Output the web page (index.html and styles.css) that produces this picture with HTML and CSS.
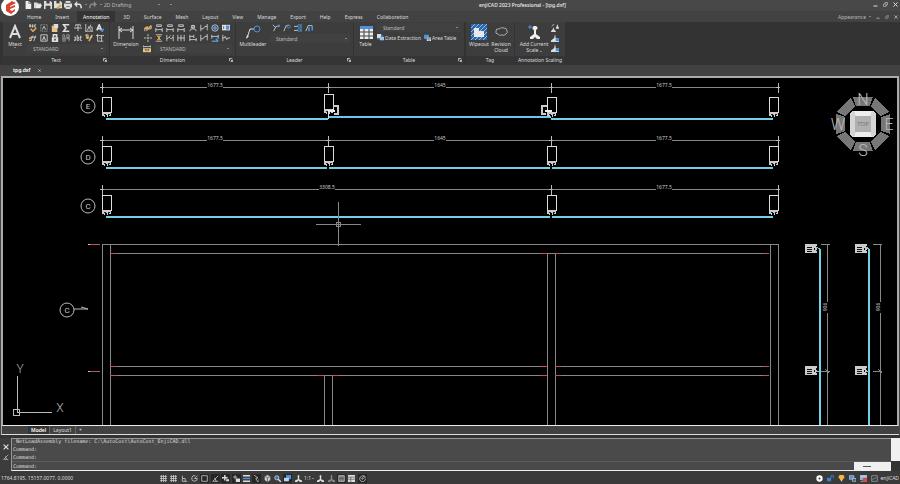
FILE: index.html
```html
<!DOCTYPE html>
<html lang="en">
  <head>
    <meta charset="utf-8" />
    <title>enjiCAD 2023 Professional - [tpg.dxf]</title>
    <meta name="viewport" content="width=device-width, initial-scale=1.0" />
    <link rel="stylesheet" href="styles.css">
  </head>
  <body>
    <!-- icon set -->
    <svg class="sprite" aria-hidden="true">
      <symbol id="new" viewBox="0 0 10 10"><path d="M2 0h4l3 3v7H2z" fill="#eee" stroke="none" /><path d="M6 0v3h3" stroke="#666" /></symbol>
      <symbol id="open" viewBox="0 0 10 10"><path d="M0 2h4l1 1h4v2H3L1 9H0z" fill="#ddd" stroke="none" /><path d="M3 5h7L8 9H1z" fill="#eee" stroke="none" /></symbol>
      <symbol id="save" viewBox="0 0 10 10"><path d="M0 0h8l2 2v8H0z" fill="#ddd" stroke="none" /><path d="M3 0h4v3H3zM2 6h6v4H2z" fill="#444" stroke="none" /></symbol>
      <symbol id="saveas" viewBox="0 0 10 10"><path d="M0 0h8l2 2v7H0z" fill="#ddd" stroke="none" /><path d="M3 0h4v3H3z" fill="#444" stroke="none" /><path d="M3 8l5-4 2 2-5 4z" fill="#e3a950" stroke="none" /></symbol>
      <symbol id="print" viewBox="0 0 10 10"><path d="M2 0h6v3h2v5H8v2H2V8H0V3h2z" fill="#ddd" stroke="none" /><path d="M2 3h6M3 7h4" stroke="#444" /></symbol>
      <symbol id="undo" viewBox="0 0 10 10"><path d="M3 4h3q3 0 3 5" stroke-width="2" /><path d="M0 4l4-4v8z" fill="currentColor" stroke="none" /></symbol>
      <symbol id="redo" viewBox="0 0 10 10"><path d="M7 4H4Q1 4 1 9" stroke-width="2" /><path d="M10 4L6 0v8z" fill="currentColor" stroke="none" /></symbol>
      <symbol id="spell" viewBox="0 0 10 10"><path d="M0 4V1h2v3M0 3h2M4 1h1v3H4zM9 1H7v3h2" /><path d="M2 6l3 3 4-4" stroke="#e3a950" stroke-width="2" /></symbol>
      <symbol id="textfind" viewBox="0 0 10 10"><path d="M1 1h8v8H1z" stroke-dasharray="2 1" stroke="#999" /><path d="M3 7l2-4 2 4" /></symbol>
      <symbol id="paste" viewBox="0 0 10 10"><path d="M1 2h7v8H1z" fill="#e3c58c" stroke="none" /><path d="M3 0h6v5H5z" fill="#ddd" stroke="none" /></symbol>
      <symbol id="sigma" viewBox="0 0 10 10"><path d="M8 2V1H2l3 4-3 4h6V8" stroke-width="2" /></symbol>
      <symbol id="strike" viewBox="0 0 10 10"><path d="M2 1h6M5 1v8M0 5h10" /><path d="M2 1v2M8 1v2" /></symbol>
      <symbol id="align" viewBox="0 0 10 10"><path d="M1 0v10M3 8l2-5 2 5M7 1v3h2v6M1 9h8" /></symbol>
      <symbol id="style" viewBox="0 0 10 10"><path d="M1 8l3-7 3 7M2 6h4" stroke-width="2" /><path d="M6 8l4-2-2 4z" fill="#4b94dc" stroke="#4b94dc" /></symbol>
      <symbol id="edit" viewBox="0 0 10 10"><path d="M5 2L2 9M8 2L6 9M0 8h3M3 4h6" /><path d="M0 6l5-3" stroke="#e3a950" stroke-width="2" /></symbol>
      <symbol id="frame" viewBox="0 0 10 10"><path d="M1 1h8v8H1zM3 8l2-5 2 5M4 6h2" /></symbol>
      <symbol id="lock" viewBox="0 0 10 10"><path d="M3 4V1h4v3" stroke-width="2" /><path d="M1 4h8v6H1z" fill="#ddd" stroke="none" /><path d="M4 6h2v2H4z" fill="#444" stroke="none" /></symbol>
      <symbol id="case" viewBox="0 0 10 10"><path d="M1 1v3M1 1h2v3M6 1v3h3V1zM1 6v3h3V6zM6 6h3v3M0 5h10" stroke="#aaa" /></symbol>
      <symbol id="word" viewBox="0 0 10 10"><path d="M0 4h2v4H0V6M4 1v7h2V4H4M8 2v6h2M8 4h2" /></symbol>
      <symbol id="brush" viewBox="0 0 10 10"><path d="M1 1l3 5M9 1L5 9" stroke="#e3a950" stroke-width="2" /><path d="M1 1h3v4H1M6 4h3" /></symbol>
      <symbol id="crop" viewBox="0 0 10 10"><path d="M0 2h10M2 0v9h7M7 2v7M4 5h2" /></symbol>
      <symbol id="dimquick" viewBox="0 0 10 10"><path d="M1 9V5M9 6V2M1 6h8" /><path d="M1 5l3-1v3l5-5" stroke="#e3a950" stroke-width="2" /></symbol>
      <symbol id="dimlin" viewBox="0 0 10 10"><path d="M1 5v5M9 5v5M1 7h8M2 1h6v2H2z" /></symbol>
      <symbol id="dimrad" viewBox="0 0 10 10"><path d="M1 9q0-3 4-3t4 3M5 6V1M3 2h4v3H3z" /></symbol>
      <symbol id="dimjog" viewBox="0 0 10 10"><path d="M1 1v8M9 0v8M1 6h3l2-3h3" /></symbol>
      <symbol id="dimdia" viewBox="0 0 10 10"><circle cx="5" cy="5" r="4" /><circle cx="5" cy="5" r="2" fill="#4b94dc" stroke="#4b94dc" /></symbol>
      <symbol id="dimtol" viewBox="0 0 10 10"><path d="M0 1h10v7H0z" fill="#ddd" stroke="none" /><path d="M5 2h4v5H5z" fill="#4b94dc" stroke="none" /><path d="M2 3v3" stroke="#444" /></symbol>
      <symbol id="dimcen" viewBox="0 0 10 10"><path d="M5 0v3M5 7v3M0 5h3M7 5h3M4 5h2M5 4v2" /></symbol>
      <symbol id="dimspace" viewBox="0 0 10 10"><path d="M1 1h8M1 9h8" /><path d="M3 3h4L3 7h4z" stroke="#e3a950" fill="#e3a950" /></symbol>
      <symbol id="dimbreak" viewBox="0 0 10 10"><path d="M1 1v8M9 1v8M1 6l3-2 2 2 3-2" /><path d="M6 1l-2 3" stroke="#e3a950" /></symbol>
      <symbol id="dimcont" viewBox="0 0 10 10"><path d="M1 1v8M5 1v8M9 1v8M1 5h8" /></symbol>
      <symbol id="dimbase" viewBox="0 0 10 10"><path d="M1 1v8M9 5v4M1 3h5M6 1v4M1 7h8" /></symbol>
      <symbol id="dimupd" viewBox="0 0 10 10"><path d="M1 1v5M9 1v5M1 3h8" /><path d="M1 9h8M6 6l3 3" stroke="#4b94dc" stroke-width="2" /></symbol>
      <symbol id="dimwave" viewBox="0 0 10 10"><path d="M1 1v8M1 5h2l1-2 2 4 1-2h3" /></symbol>
      <symbol id="dimstyle" viewBox="0 0 10 10"><path d="M0 4h10v5H0z" fill="#e3c58c" stroke="none" /><path d="M0 0v3M10 0v3M0 2h10" /><path d="M3 5v2M5 5v3M7 5v2" stroke="#444" /></symbol>
      <symbol id="ldadd" viewBox="0 0 10 10"><path d="M2 9l3-6h2M1 1l3 3" /><path d="M7 2h3M8 1v3" stroke="#4b94dc" stroke-width="2" /></symbol>
      <symbol id="ldrem" viewBox="0 0 10 10"><path d="M1 9l3-7h3" /><circle cx="7" cy="3" r="2" stroke="#4b94dc" /></symbol>
      <symbol id="ldalign" viewBox="0 0 10 10"><path d="M0 3h5M0 8h5" /><path d="M5 1h3v3H5zM5 6h3v3H5zM9 0v10" stroke="#4b94dc" /></symbol>
      <symbol id="ldcol" viewBox="0 0 10 10"><path d="M1 9l3-7h5" /><path d="M5 4v5M9 2v6" stroke="#4b94dc" stroke-width="2" /></symbol>
      <symbol id="extract" viewBox="0 0 10 10"><path d="M0 0h6v6H0z" fill="#ddd" stroke="none" /><path d="M4 4h6v5H4z" fill="#9ac4ee" stroke="none" /><path d="M0 7h4M6 2h2v2" stroke="#4b94dc" /></symbol>
      <symbol id="area" viewBox="0 0 10 10"><path d="M0 1h7v6H0z" fill="#4b94dc" stroke="none" /><path d="M4 5h6v5H4z" fill="#ddd" stroke="none" /><path d="M4 7h6M7 5v5" stroke="#666" /></symbol>
      <symbol id="scale" viewBox="0 0 10 10"><path d="M5 0a2 2 0 0 1 1 3v3l4 2v2H7L5 8 3 10H0V8l4-2V3a2 2 0 0 1 1-3z" fill="currentColor" stroke="none" /></symbol>
      <symbol id="scaleblue" viewBox="0 0 10 10"><path d="M5 0l1 5 4 3v2H0V8l4-3z" fill="currentColor" stroke="none" /><path d="M6 5h4v4H6z" fill="#4b94dc" stroke="none" /></symbol>
      <symbol id="scaletwo" viewBox="0 0 10 10"><path d="M3 4l1 3 2 2v1H0V9l2-2zM8 0l1 3 1 2v1H6V5l1-2z" fill="currentColor" stroke="none" /><path d="M1 3l3-3" /></symbol>
      <symbol id="launch" viewBox="0 0 10 10"><path d="M1 8V1h7M4 4l4 4M9 4v5H4" stroke-width="2" /></symbol>
      <symbol id="grid" viewBox="0 0 10 10"><path d="M0 2h10M0 5h10M0 8h10M2 0v10M5 0v10M8 0v10" /></symbol>
      <symbol id="ortho" viewBox="0 0 10 10"><path d="M2 1v8h7M2 5h4v4" /></symbol>
      <symbol id="polar" viewBox="0 0 10 10"><path d="M9 5a4 4 0 1 1-3-4M5 5l4-4M5 5h4" /></symbol>
      <symbol id="snap" viewBox="0 0 10 10"><path d="M1 1h8v8H1z" /></symbol>
      <symbol id="track" viewBox="0 0 10 10"><path d="M9 1L1 9h8M4 4l2 5" /></symbol>
      <symbol id="dyn" viewBox="0 0 10 10"><path d="M4 0v8M0 4h8" stroke-width="2" /><path d="M6 6h4v3H6z" fill="currentColor" stroke="none" /></symbol>
      <symbol id="input" viewBox="0 0 10 10"><path d="M3 0v6M0 3h6" /><path d="M4 5h6v5H4z" fill="currentColor" stroke="none" /></symbol>
      <symbol id="lwt" viewBox="0 0 10 10"><path d="M0 1h10M0 9h10" stroke-width="2" /><path d="M0 5h10" stroke="#4b94dc" stroke-width="2" /></symbol>
      <symbol id="cycle" viewBox="0 0 10 10"><path d="M1 0l6 4-3 1 3 5" /><path d="M8 6v4" stroke="#4b94dc" /></symbol>
      <symbol id="cube" viewBox="0 0 10 10"><path d="M1 2l4-2 4 2v5l-4 3-4-3z" fill="#ccc" stroke="none" /><path d="M1 2l4 2 4-2M5 4v6" stroke="#555" /></symbol>
      <symbol id="zoom" viewBox="0 0 10 10"><circle cx="4" cy="4" r="3" fill="#3c76b4" /><path d="M6 6l4 4" stroke-width="2" /></symbol>
      <symbol id="windows" viewBox="0 0 10 10"><path d="M3 0h7v6H3z" fill="#4b94dc" stroke="none" /><path d="M0 4h7v5H0z" fill="#b5d5f5" stroke="none" /></symbol>
      <symbol id="list" viewBox="0 0 10 10"><path d="M1 1h8v8H1z" fill="#999" /><path d="M1 3h8M1 5h8M1 7h8" stroke="#444" /></symbol>
      <symbol id="sheet" viewBox="0 0 10 10"><path d="M0 0h10v10H0z" fill="#ddd" stroke="none" /><path d="M0 3h10M0 6h10M4 3v7" stroke="#555" /></symbol>
      <symbol id="sync" viewBox="0 0 10 10"><path d="M9 5a4 4 0 1 1-2-3M7 0v3h3" /><circle cx="5" cy="5" r="1" /></symbol>
      <symbol id="gear" viewBox="0 0 10 10"><circle cx="5" cy="5" r="3" stroke="#fff" stroke-width="3" /></symbol>
      <symbol id="unlock" viewBox="0 0 10 10"><path d="M0 4h6v5H0z" fill="#3f7fd0" stroke="none" /><path d="M6 4V1h3v4" stroke="#4b94dc" /></symbol>
      <symbol id="bulb" viewBox="0 0 10 10"><path d="M5 0a3 3 0 0 1 2 6v1H3V6a3 3 0 0 1 2-6z" fill="#f3b83c" stroke="none" /><path d="M4 8h2" stroke-width="2" /></symbol>
      <symbol id="screens" viewBox="0 0 10 10"><path d="M0 1h7v5H0z" fill="#4b94dc" stroke="#ccc" /><path d="M5 5h5v4H5z" fill="#2d5d94" stroke="#ccc" /></symbol>
      <symbol id="notify" viewBox="0 0 10 10"><path d="M0 0h10v7H0z" fill="#8fbbe8" stroke="none" /><path d="M4 4h6v6H4z" fill="#d84a4a" stroke="none" /><path d="M1 2h8M1 9h3" /></symbol>
      <symbol id="full" viewBox="0 0 10 10"><path d="M1 1h8v8H1zM4 6l2-2M3 7V5M7 3v2" stroke="#aaa" /></symbol>
      <symbol id="min" viewBox="0 0 10 10"><path d="M1 8h8" stroke-width="2" /></symbol>
      <symbol id="restore" viewBox="0 0 10 10"><path d="M1 4h5v5H1zM4 4V1h5v5H6" /></symbol>
      <symbol id="close" viewBox="0 0 10 10"><path d="M1 1l8 8M9 1L1 9" stroke-width="2" /></symbol>
    </svg>

    <header class="titlebar">
      <svg class="logo" viewBox="0 0 20 20" role="img" aria-label="enjiCAD">
        <circle cx="10" cy="10" r="9" fill="#fff" />
        <path d="M6 8l6-4 4 2-6 3v1l5-2v2l-5 2v1l2 1 3-2v2l-4 3-5-3z" fill="#d8432c" />
      </svg>
      <div class="quick">
        <button aria-label="New"><svg><use href="#new" /></svg></button>
        <button aria-label="Open"><svg><use href="#open" /></svg></button>
        <button aria-label="Save"><svg><use href="#save" /></svg></button>
        <button aria-label="Save as"><svg><use href="#saveas" /></svg></button>
        <button aria-label="Print"><svg><use href="#print" /></svg></button>
        <button class="more" aria-label="Undo"><svg><use href="#undo" /></svg></button>
        <button class="more dim" aria-label="Redo"><svg><use href="#redo" /></svg></button>
        <span class="combo workspace">
          <select aria-label="Workspace"><option>2D Drafting</option></select>
        </span>
        <button class="more" aria-label="Customize"></button>
      </div>
      <h1>enjiCAD 2023 Professional - [tpg.dxf]</h1>
      <div class="winButtons">
        <button aria-label="Minimize"><svg><use href="#min" /></svg></button>
        <button aria-label="Restore"><svg><use href="#restore" /></svg></button>
        <button aria-label="Close"><svg><use href="#close" /></svg></button>
      </div>
    </header>

    <div class="menubar">
      <nav>
        <a href="#">Home</a>
        <a href="#">Insert</a>
        <a href="#" class="active">Annotation</a>
        <a href="#">3D</a>
        <a href="#">Surface</a>
        <a href="#">Mesh</a>
        <a href="#">Layout</a>
        <a href="#">View</a>
        <a href="#">Manage</a>
        <a href="#">Export</a>
        <a href="#">Help</a>
        <a href="#">Express</a>
        <a href="#">Collaboration</a>
      </nav>
      <div class="winButtons small">
        <button class="more">Appearance</button>
        <button aria-label="Minimize drawing"><svg><use href="#min" /></svg></button>
        <button aria-label="Restore drawing"><svg><use href="#restore" /></svg></button>
        <button aria-label="Close drawing"><svg><use href="#close" /></svg></button>
      </div>
    </div>

    <div class="ribbon">
      <section class="panel textPanel">
        <div class="panelBody">
          <button class="big">
            <svg viewBox="0 0 16 16"><path d="M3 14L8 2l5 12M5 10h6" stroke-width="2" /></svg>
            Mtext<i class="arrow"></i>
          </button>
          <div class="tools">
            <div class="iconGrid cols7">
              <button aria-label="Spelling"><svg><use href="#spell" /></svg></button>
              <button aria-label="Find text"><svg><use href="#textfind" /></svg></button>
              <button aria-label="Paste text"><svg><use href="#paste" /></svg></button>
              <button aria-label="Symbol"><svg><use href="#sigma" /></svg></button>
              <button aria-label="Strikethrough"><svg><use href="#strike" /></svg></button>
              <button aria-label="Align text"><svg><use href="#align" /></svg></button>
              <button aria-label="Text style"><svg><use href="#style" /></svg></button>
              <button aria-label="Edit text"><svg><use href="#edit" /></svg></button>
              <button aria-label="Text frame"><svg><use href="#frame" /></svg></button>
              <button aria-label="Lock text"><svg><use href="#lock" /></svg></button>
              <button aria-label="Change case"><svg><use href="#case" /></svg></button>
              <button aria-label="Word"><svg><use href="#word" /></svg></button>
              <button aria-label="Match text"><svg><use href="#brush" /></svg></button>
              <button aria-label="Text mask"><svg><use href="#crop" /></svg></button>
            </div>
            <span class="combo"><select aria-label="Text style"><option>STANDARD</option></select></span>
          </div>
        </div>
        <h2>Text<button aria-label="Text settings"><svg><use href="#launch" /></svg></button></h2>
      </section>

      <section class="panel dimPanel">
        <div class="panelBody">
          <button class="big">
            <svg viewBox="0 0 16 16"><path d="M1 2v13M15 2v13M1 6h14M4 4L1 6l3 2M12 4l3 2-3 2" /></svg>
            Dimension<i class="arrow"></i>
          </button>
          <div class="tools">
            <div class="iconGrid cols8">
              <button aria-label="Quick dimension"><svg><use href="#dimquick" /></svg></button>
              <button aria-label="Linear"><svg><use href="#dimlin" /></svg></button>
              <button aria-label="Aligned"><svg><use href="#dimlin" /></svg></button>
              <button aria-label="Arc length"><svg><use href="#dimlin" /></svg></button>
              <button aria-label="Radius"><svg><use href="#dimrad" /></svg></button>
              <button aria-label="Jogged"><svg><use href="#dimjog" /></svg></button>
              <button aria-label="Diameter"><svg><use href="#dimdia" /></svg></button>
              <button aria-label="Tolerance"><svg><use href="#dimtol" /></svg></button>
              <button aria-label="Center mark"><svg><use href="#dimcen" /></svg></button>
              <button aria-label="Dimension space"><svg><use href="#dimspace" /></svg></button>
              <button aria-label="Dimension break"><svg><use href="#dimbreak" /></svg></button>
              <button aria-label="Continue"><svg><use href="#dimcont" /></svg></button>
              <button aria-label="Baseline"><svg><use href="#dimbase" /></svg></button>
              <button aria-label="Oblique"><svg><use href="#dimjog" /></svg></button>
              <button aria-label="Update"><svg><use href="#dimupd" /></svg></button>
              <button aria-label="Jog line"><svg><use href="#dimwave" /></svg></button>
            </div>
            <div class="row">
              <button class="icon" aria-label="Dimension style"><svg><use href="#dimstyle" /></svg></button>
              <span class="combo"><select aria-label="Dimension style"><option>STANDARD</option></select></span>
            </div>
          </div>
        </div>
        <h2>Dimension<button aria-label="Dimension settings"><svg><use href="#launch" /></svg></button></h2>
      </section>

      <section class="panel leaderPanel">
        <div class="panelBody">
          <button class="big">
            <svg viewBox="0 0 16 16"><path d="M2 14l3-9h4" /><path d="M1 15l1-4 2 1z" fill="#ddd" stroke="none" /><circle cx="12" cy="5" r="3" stroke="#4b94dc" /></svg>
            Multileader
          </button>
          <div class="tools">
            <div class="iconGrid cols4">
              <button aria-label="Add leader"><svg><use href="#ldadd" /></svg></button>
              <button aria-label="Remove leader"><svg><use href="#ldrem" /></svg></button>
              <button aria-label="Align leaders"><svg><use href="#ldalign" /></svg></button>
              <button aria-label="Collect leaders"><svg><use href="#ldcol" /></svg></button>
            </div>
            <span class="combo"><select aria-label="Leader style"><option>Standard</option></select></span>
          </div>
        </div>
        <h2>Leader<button aria-label="Leader settings"><svg><use href="#launch" /></svg></button></h2>
      </section>

      <section class="panel tablePanel">
        <div class="panelBody">
          <button class="big">
            <svg viewBox="0 0 16 16"><path d="M2 3h13v12H2z" fill="#eee" stroke="none" /><path d="M2 2h13v3H2z" fill="#4b94dc" stroke="none" /><path d="M2 8h13M2 12h13M6 5v10M11 5v10" stroke="#444" /></svg>
            Table
          </button>
          <div class="tools">
            <span class="combo"><select aria-label="Table style"><option>Standard</option></select></span>
            <div class="row">
              <button class="labelled"><svg><use href="#extract" /></svg>Data Extraction</button>
              <button class="labelled"><svg><use href="#area" /></svg>Area Table</button>
            </div>
          </div>
        </div>
        <h2>Table<button aria-label="Table settings"><svg><use href="#launch" /></svg></button></h2>
      </section>

      <section class="panel tagPanel">
        <div class="panelBody">
          <button class="big">
            <svg viewBox="0 0 16 16"><path d="M0 0h16v16H0z" fill="#2d66a8" stroke="none" /><path d="M0 4l4-4M0 8l8-8M0 12L12 0M0 16L16 0M4 16L16 4M8 16l8-8M12 16l4-4" stroke="#8fbbe8" /><path d="M3 4h5v3h5v6H3z" fill="#e8e8e8" stroke="none" /></svg>
            Wipeout
          </button>
          <button class="big">
            <svg viewBox="0 0 16 16"><path d="M3 7q0-3 3-2 2-2 5-1 3 0 3 3 1 2-1 3-2 2-4 1-3 1-4-1-3 0-2-3z" stroke="#aaa" /></svg>
            Revision<br />Cloud
          </button>
        </div>
        <h2>Tag</h2>
      </section>

      <section class="panel scalePanel">
        <div class="panelBody">
          <button class="big">
            <svg viewBox="0 0 16 16"><path d="M9 2a2 2 0 0 1 1 4v4l4 3v2h-3l-2-2-2 2H4v-2l4-3V6a2 2 0 0 1 1-4z" fill="#eee" stroke="none" /><path d="M4 1v4M2 3h4" stroke="#4b94dc" /></svg>
            <span>Add Current<br />Scale <i class="arrow"></i></span>
          </button>
          <div class="iconGrid cols1">
            <button aria-label="Add scale"><svg><use href="#scaletwo" /></svg></button>
            <button aria-label="Scale list"><svg><use href="#scaleblue" /></svg></button>
            <button aria-label="Sync scale"><svg><use href="#scaleblue" /></svg></button>
          </div>
        </div>
        <h2>Annotation Scaling</h2>
      </section>
    </div>

    <div class="docTabs">
      <a href="#" class="docTab">tpg.dxf</a>
      <button aria-label="Close tab"><svg><use href="#close" /></svg></button>
    </div>

    <main class="viewport">
      <svg class="drawing" viewBox="3 78 894 347" preserveAspectRatio="xMinYMin slice">
        <defs>
          <g id="post">
            <path d="M-4 0h9v15h-9z" fill="none" stroke="#ddd" />
            <path d="M-4 15h9v4h-2v-1h-1v2h-1v-2h-2v2h-1v-1h-2z" fill="#ccc" stroke="none" />
            <path d="M-2 17h2M2 17h2" stroke="#222" />
          </g>
          <g id="hinge">
            <path d="M2 0h5v8h-4" fill="none" stroke="#ccc" stroke-width="2" />
            <path d="M-3 5h7" fill="none" stroke="#eee" stroke-width="2" />
          </g>
          <g id="rail">
            <path d="M0 0h12v9H0z" fill="#ccc" />
            <path d="M2 3h5M2 5h5M2 7h5M11 2v2M11 6v1M9 4v2" fill="none" stroke="#111" />
          </g>
          <path id="tick" d="M0-4v10M-2 0h4" stroke="#bbb" />
          <path id="ring" d="M-10-27h20l-3 9H-7z" fill="#777" />
        </defs>

        <!-- plan sections -->
        <g class="thin">
          <path d="M102 87h676M102 140h676M102 189h676" />
          <use href="#tick" x="102" y="87" /><use href="#tick" x="328" y="87" /><use href="#tick" x="551" y="87" /><use href="#tick" x="778" y="87" />
          <use href="#tick" x="102" y="140" /><use href="#tick" x="328" y="140" /><use href="#tick" x="551" y="140" /><use href="#tick" x="778" y="140" />
          <use href="#tick" x="102" y="189" /><use href="#tick" x="551" y="189" /><use href="#tick" x="778" y="189" />
        </g>
        <path d="M207 84h16v6h-16zM434 84h12v6h-12zM656 84h16v6h-16zM207 137h16v6h-16zM434 137h12v6h-12zM656 137h16v6h-16zM319 186h16v6h-16zM656 186h16v6h-16z" />
        <g class="dimText">
          <text x="215" y="87">1677.5</text><text x="440" y="87">1645</text><text x="664" y="87">1677.5</text>
          <text x="215" y="140">1677.5</text><text x="440" y="140">1645</text><text x="664" y="140">1677.5</text>
          <text x="327" y="189">3308.5</text><text x="664" y="189">1677.5</text>
        </g>
        <g class="glass">
          <path d="M106 119h222M551 119h222M106 168h221M329 168h221M552 168h221M106 217h444M552 217h221" />
          <path class="sash" d="M328 117h223" />
        </g>
        <g>
          <use href="#post" x="106" y="97" /><use href="#post" x="328" y="94" /><use href="#post" x="551" y="97" /><use href="#post" x="773" y="97" />
          <use href="#post" x="106" y="146" /><use href="#post" x="328" y="146" /><use href="#post" x="551" y="146" /><use href="#post" x="773" y="146" />
          <use href="#post" x="106" y="195" /><use href="#post" x="551" y="195" /><use href="#post" x="773" y="195" />
          <use href="#hinge" x="331" y="106" />
          <use href="#hinge" transform="translate(549 106) scale(-1 1)" />
          <path d="M328 119v-6l3-2" fill="none" stroke="#ddd" />
        </g>
        <g class="mark">
          <circle cx="88" cy="106" r="7" /><text x="88" y="109">E</text>
          <circle cx="88" cy="157" r="7" /><text x="88" y="160">D</text>
          <circle cx="88" cy="206" r="7" /><text x="88" y="209">C</text>
          <circle cx="67" cy="310" r="7" /><text x="67" y="313">C</text>
          <path d="M74 309h14l-7-2" />
        </g>

        <!-- elevation -->
        <g class="thin">
          <path d="M102 244h676M110 253h659M110 366h437M555 366h214M110 375h437M555 375h214" />
          <path d="M102 244v181M110 244v181M770 244v181M778 244v181M547 253v172M555 253v172M324 375v50M332 375v50" />
        </g>
        <path class="red" d="M88 244h12M88 371h12M110 253h7M110 366h7M110 375h7M540 253h7M555 253h6M540 366h7M555 366h6M540 375h7M555 375h6M763 253h6M763 366h6M763 375h6M317 375h7M332 375h7" />
        <path d="M88 244h2M88 371h2" stroke="#ccc" />

        <!-- side sections -->
        <g class="glass"><path d="M820 249v176M869 249v176" /></g>
        <g class="thin">
          <path d="M827 244v181M880 244v181M821 244h9M873 244h9M821 371h9M873 371h9M825 369l4 4M878 369l4 4" />
        </g>
        <use href="#rail" x="805" y="244" /><use href="#rail" x="855" y="244" />
        <use href="#rail" x="805" y="366" /><use href="#rail" x="855" y="366" />
        <path d="M816 247l4 2M866 247l3 2M816 371h4M866 371h3" stroke="#9bb" />
        <path d="M824 302h6v11h-6zM877 302h6v11h-6z" />
        <g class="dimText">
          <text transform="translate(827 307) rotate(-90)">906</text>
          <text transform="translate(880 307) rotate(-90)">906</text>
        </g>

        <!-- cursor and UCS -->
        <path d="M316 224h45M338 202v44M336 222h4v4h-4z" fill="none" stroke="#888" />
        <path d="M13 409h6v6h-6zM17 376v36M17 412h35" fill="none" stroke="#bbb" />
        <g class="compass ucs"><text x="20" y="373">Y</text><text x="60" y="412">X</text></g>

        <!-- view cube -->
        <g transform="translate(863 124)">
          <use href="#ring" /><use href="#ring" transform="rotate(45)" /><use href="#ring" transform="rotate(90)" /><use href="#ring" transform="rotate(135)" />
          <use href="#ring" transform="rotate(180)" /><use href="#ring" transform="rotate(225)" /><use href="#ring" transform="rotate(270)" /><use href="#ring" transform="rotate(315)" />
          <rect x="-13" y="-13" width="26" height="26" rx="4" fill="#d5d5d5" />
          <path d="M-9-13h18l-2 5H-7zM-9 13h18l-2-5H-7z" fill="#eee" />
          <rect x="-8" y="-8" width="16" height="16" fill="#b0b0b0" />
          <text class="cubeText" y="2">TOP</text>
        </g>
        <g class="compass">
          <text x="863" y="105">N</text><text x="889" y="130">E</text><text x="863" y="156">S</text><text x="838" y="130">W</text>
        </g>
      </svg>
    </main>

    <div class="layoutTabs">
      <a href="#" class="active">Model</a>
      <a href="#">Layout1</a>
      <a href="#" aria-label="Add layout">+</a>
    </div>

    <section class="command">
      <div class="commandSide">
        <button aria-label="Close command line"><svg><use href="#close" /></svg></button>
        <button aria-label="Command options"><svg><use href="#track" /></svg></button>
      </div>
      <div class="commandMain">
        <div class="log">
          <p>_NetLoadAssembly filename: C:\AutoCost\AutoCost_EnjiCAD.dll</p>
          <p>Command:</p>
          <p>Command:</p>
        </div>
        <div class="prompt">
          <label for="cmd">Command:</label>
          <input type="text" id="cmd" name="cmd" />
          <span class="hscroll"></span>
        </div>
      </div>
      <div class="vscroll"></div>
    </section>

    <footer class="status">
      <span class="coords">1764.8195, 15157.0077, 0.0000</span>
      <div class="statusIcons modes">
        <button aria-label="Snap"><svg><use href="#grid" /></svg></button>
        <button aria-label="Grid"><svg><use href="#grid" /></svg></button>
        <button aria-label="Ortho"><svg><use href="#ortho" /></svg></button>
        <button aria-label="Polar"><svg><use href="#polar" /></svg></button>
        <button aria-label="Object snap" class="on"><svg><use href="#snap" /></svg></button>
        <button aria-label="Tracking" class="on"><svg><use href="#track" /></svg></button>
        <button aria-label="Dynamic UCS" class="on"><svg><use href="#dyn" /></svg></button>
        <button aria-label="Dynamic input" class="on"><svg><use href="#input" /></svg></button>
        <button aria-label="Lineweight"><svg><use href="#lwt" /></svg></button>
        <button aria-label="Cycling" class="on"><svg><use href="#cycle" /></svg></button>
        <button aria-label="3D snap"><svg><use href="#cube" /></svg></button>
        <button aria-label="Zoom"><svg><use href="#zoom" /></svg></button>
        <button aria-label="Quick properties" class="on"><svg><use href="#windows" /></svg></button>
        <button aria-label="Annotation scale"><svg><use href="#scale" /></svg></button>
        <button class="more ratio">1:1</button>
        <button aria-label="Annotation visibility"><svg><use href="#scale" /></svg></button>
        <button aria-label="Auto scale" class="dim"><svg><use href="#scale" /></svg></button>
        <button aria-label="Isolate" class="on"><svg><use href="#list" /></svg></button>
        <button aria-label="Table"><svg><use href="#sheet" /></svg></button>
        <button aria-label="Sync" class="on"><svg><use href="#sync" /></svg></button>
      </div>
      <div class="statusIcons right">
        <button aria-label="Settings"><svg><use href="#gear" /></svg></button>
        <button aria-label="Unlock"><svg><use href="#unlock" /></svg></button>
        <button aria-label="Tips"><svg><use href="#bulb" /></svg></button>
        <button aria-label="Screens"><svg><use href="#screens" /></svg></button>
        <button aria-label="Notifications"><svg><use href="#notify" /></svg></button>
        <button aria-label="Full screen"><svg><use href="#full" /></svg></button>
        <span>enjiCAD</span>
      </div>
    </footer>
  </body>
</html>
```

FILE: styles.css
```css
* {
  box-sizing: border-box;
}
body {
  margin: 0;
  min-height: 100vh;
  display: flex;
  flex-direction: column;
  background: #444;
  color: #ddd;
  font-family: "Noto Sans", "Open Sans", sans-serif;
  font-size: 5px;
  line-height: 8px;
}
.sprite {
  display: none;
}
svg {
  display: block;
  width: 8px;
  height: 8px;
  fill: none;
  stroke: currentColor;
  stroke-width: 1;
}
button {
  padding: 0;
  border: none;
  background: none;
  color: inherit;
  font: inherit;
  cursor: pointer;
}
a {
  color: inherit;
  text-decoration: none;
}
h1,
h2,
p {
  margin: 0;
  font-size: 5px;
  font-weight: 400;
}
select,
input {
  padding: 0;
  border: none;
  outline: none;
  background: none;
  color: inherit;
  font: inherit;
}
.arrow,
.more::after,
.combo::after {
  content: "";
  display: inline-block;
  border: 1px solid transparent;
  border-top-color: #ccc;
  border-bottom: none;
}
.more {
  display: flex;
  align-items: center;
  gap: 3px;
}
.dim {
  color: #888;
}

/* title bar */
.titlebar {
  position: relative;
  display: flex;
  justify-content: space-between;
  align-items: center;
  height: 11px;
  padding: 0 2px 2px 24px;
  background: #484848;
}
.logo {
  position: absolute;
  left: 0;
  top: -3px;
  width: 20px;
  height: 20px;
  stroke: none;
  z-index: 1;
}
.quick {
  display: flex;
  align-items: center;
  gap: 2px;
}
.workspace {
  width: 56px;
  margin-right: 8px;
}
.titlebar h1 {
  color: #eee;
  font-weight: 500;
}
.winButtons {
  display: flex;
  align-items: center;
  gap: 5px;
}
.winButtons svg {
  width: 5px;
  height: 5px;
}
.small {
  color: #bbb;
}
.small svg {
  width: 4px;
  height: 4px;
}

/* menu tabs */
.menubar {
  display: flex;
  justify-content: space-between;
  height: 11px;
  padding: 0 2px 0 21px;
  background: #424242;
}
.menubar nav {
  display: flex;
  gap: 2px;
}
.menubar nav a {
  padding: 2px 6px 0;
}
.menubar nav .active {
  background: #343434;
  color: #fff;
}

/* ribbon */
.ribbon {
  display: flex;
  gap: 1px;
  height: 43px;
  padding-left: 3px;
  background: #333;
}
.panel {
  display: flex;
  flex-direction: column;
  background: #3d3d3d;
}
.panelBody {
  flex: 1;
  display: flex;
  padding: 1px 3px 0 2px;
}
.panel h2 {
  position: relative;
  height: 9px;
  background: #353535;
  text-align: center;
}
.panel h2 button {
  position: absolute;
  right: 2px;
  top: 2px;
}
.panel h2 svg {
  width: 4px;
  height: 4px;
}
.textPanel {
  width: 106px;
}
.dimPanel {
  width: 125px;
}
.leaderPanel {
  width: 117px;
}
.tablePanel {
  width: 110px;
}
.tagPanel {
  width: 48px;
  margin-left: 1px;
}
.scalePanel {
  width: 50px;
}
.big {
  display: flex;
  flex-direction: column;
  align-items: center;
  flex-shrink: 0;
  padding-top: 1px;
  line-height: 6px;
}
.big svg {
  width: 16px;
  height: 16px;
  margin-bottom: 1px;
}
.textPanel .big {
  width: 20px;
}
.dimPanel .big {
  width: 28px;
}
.leaderPanel .big {
  width: 30px;
}
.tablePanel .big {
  width: 19px;
}
.tagPanel .big {
  width: 22px;
}
.scalePanel .big {
  width: 34px;
}
.tools {
  flex: 1;
  display: flex;
  flex-direction: column;
  gap: 1px;
  min-width: 0;
  padding-left: 2px;
}
.iconGrid {
  display: grid;
  grid-auto-rows: 10px;
  align-items: center;
  justify-items: center;
}
.cols7 {
  grid-template-columns: repeat(7, 1fr);
}
.cols8 {
  grid-template-columns: repeat(8, 1fr);
}
.cols4 {
  grid-template-columns: repeat(4, 11px);
}
.row {
  display: flex;
  align-items: center;
  gap: 3px;
}
.row .icon {
  padding-left: 1px;
}
.labelled {
  display: flex;
  align-items: center;
  gap: 1px;
  height: 9px;
  white-space: nowrap;
}
.labelled svg {
  width: 7px;
  height: 7px;
}
.combo {
  display: flex;
  align-items: center;
  flex: 0 1 auto;
  height: 9px;
  padding: 0 3px 0 6px;
  background: #414141;
  color: #bbb;
}
.row .combo {
  flex: 1;
}
.combo select {
  flex: 1;
  min-width: 0;
  appearance: none;
}
.combo.workspace {
  padding: 0;
  background: none;
}

/* drawing tabs */
.docTabs {
  display: flex;
  align-items: center;
  gap: 8px;
  height: 11px;
  padding-left: 7px;
  background: #414141;
}
.docTab {
  height: 9px;
  padding-left: 6px;
  color: #fff;
  font-weight: 600;
}
.docTabs svg {
  width: 3px;
  height: 3px;
}

/* drawing */
.viewport {
  flex: 1;
  display: flex;
  min-height: 0;
  margin: 0 1px;
  border: 2px solid #aaa;
  border-bottom: 1px solid #eee;
  background: #000;
}
.drawing {
  flex: 1;
  width: 100%;
  height: auto;
  fill: #000;
  stroke: none;
  shape-rendering: crispEdges;
}
.thin {
  stroke: #888;
  fill: none;
}
.glass {
  stroke: #72d2e4;
  stroke-width: 2;
}
.sash {
  stroke: #70c4ee;
}
.red {
  stroke: #c8505a;
}
.dimText {
  fill: #ccc;
  stroke: none;
  font-size: 5px;
  text-anchor: middle;
}
.mark {
  fill: none;
  stroke: #bbb;
  shape-rendering: auto;
}
.mark text {
  fill: #ccc;
  stroke: none;
  font-family: Roboto, sans-serif;
  font-size: 8px;
  text-anchor: middle;
}
.compass {
  fill: #bbb;
  font-family: Roboto, sans-serif;
  font-size: 16px;
  font-weight: 300;
  text-anchor: middle;
}
.ucs {
  font-size: 12px;
}
.cubeText {
  fill: #777;
  font-size: 6px;
  text-anchor: middle;
}

/* layout tabs */
.layoutTabs {
  display: flex;
  height: 9px;
  margin: 0 1px;
  padding-left: 26px;
  border-bottom: 1px solid #ddd;
  border-left: 1px solid #aaa;
  background: #414141;
}
.layoutTabs a {
  padding: 0 3px;
}
.layoutTabs a + a {
  border-left: 1px solid #666;
}
.layoutTabs .active {
  background: #333;
  color: #fff;
  font-weight: 600;
}

/* command line */
.command {
  display: flex;
  height: 36px;
  padding-top: 3px;
  background: #333;
  font-family: "DejaVu Sans Mono", monospace;
}
.commandSide {
  display: flex;
  flex-direction: column;
  align-items: center;
  gap: 4px;
  width: 11px;
  padding-top: 6px;
  background: #3c3c3c;
}
.commandSide svg {
  width: 6px;
  height: 6px;
}
.commandMain {
  flex: 1;
  display: flex;
  flex-direction: column;
  border: 1px solid #999;
  border-right: none;
  border-bottom-color: #eee;
  background: #4a4a4a;
}
.log {
  display: flex;
  flex-direction: column;
  justify-content: flex-end;
  height: 23px;
  overflow: hidden;
  border-bottom: 1px solid #5c5c5c;
}
.log p {
  flex-shrink: 0;
  padding-left: 1px;
  line-height: 8px;
}
.prompt {
  flex: 1;
  display: flex;
  align-items: center;
  padding-left: 1px;
}
.prompt input {
  flex: 1;
  height: 8px;
}
.hscroll {
  display: flex;
  align-items: center;
  justify-content: center;
  align-self: stretch;
  width: 37px;
  background: #f0f0f0;
}
.hscroll::after {
  content: "";
  width: 8px;
  height: 1px;
  margin-right: 12px;
  background: #555;
}
.vscroll {
  width: 9px;
  margin-bottom: 10px;
  background: #f0f0f0;
}

/* status bar */
.status {
  display: flex;
  align-items: center;
  height: 13px;
  padding: 1px 1px 0;
  background: #3a3a3a;
}
.coords {
  width: 158px;
}
.statusIcons {
  display: flex;
  align-items: center;
  gap: 2px;
}
.modes {
  gap: 0;
  justify-content: space-between;
  width: 208px;
}
.statusIcons button {
  width: 9px;
  height: 9px;
  padding: 1px;
}
.statusIcons svg {
  width: 7px;
  height: 7px;
}
.statusIcons .on {
  background: #262626;
}
.statusIcons .ratio {
  gap: 1px;
  width: 11px;
  padding: 0;
}
.right {
  margin-left: auto;
}
```
